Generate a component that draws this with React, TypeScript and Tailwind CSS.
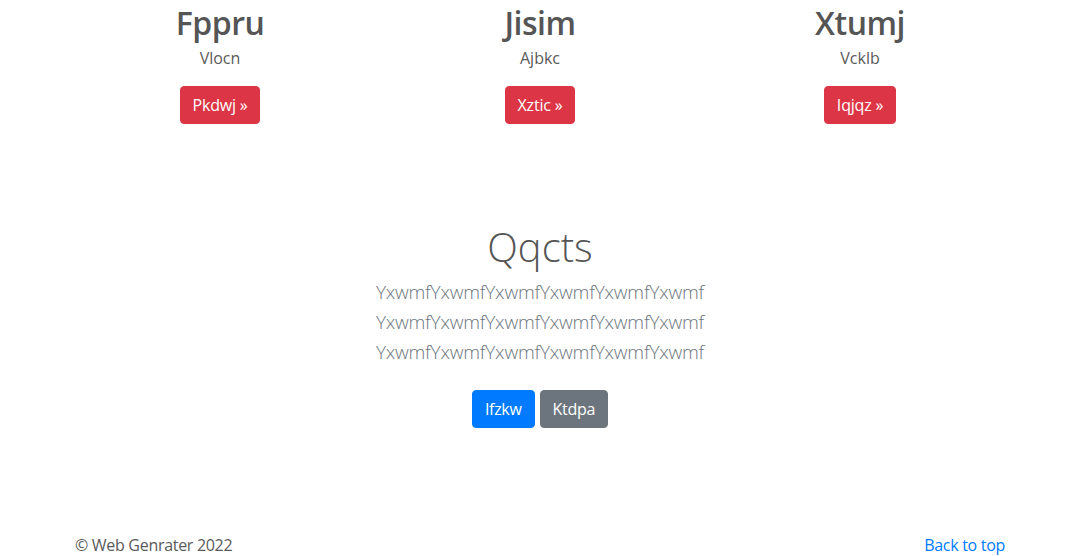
import React from 'react'

interface FeatureProps {
  title: string
  text: string
  action: string
}

const Feature: React.FC<FeatureProps> = ({ title, text, action }) => {
  return (
    <div className="flex w-[320px] flex-col items-center px-[15px] text-center">
      <h2 className="mb-1 pt-1 text-[32px] font-semibold leading-[38px] tracking-[-0.5px] text-[#555]">
        {title}
      </h2>
      <p className="mb-4 text-base leading-6 text-[#5a5a5a]">{text}</p>
      <a
        href="#"
        className="rounded-[4px] border border-[#dc3545] bg-[#dc3545] px-3 py-[6px] text-base leading-6 tracking-[-0.2px] text-white"
      >
        {action} &raquo;
      </a>
    </div>
  )
}

const features = [
  { title: 'Fppru', text: 'Vlocn', action: 'Pkdwj' },
  { title: 'Jisim', text: 'Ajbkc', action: 'Xztic' },
  { title: 'Xtumj', text: 'Vcklb', action: 'Iqjqz' },
]

export default function App() {
  return (
    <div className="h-[556px] overflow-hidden bg-white font-['Open_Sans',sans-serif]">
      <div className="mx-auto flex w-[960px] flex-row">
        {features.map((f) => (
          <Feature key={f.title} {...f} />
        ))}
      </div>

      <section className="mt-[99px] flex flex-col items-center text-center">
        <h1 className="mb-[6px] text-[40px] font-light leading-[48px] text-[#555]">
          Qqcts
        </h1>
        <p className="mb-[15px] w-[400px] text-[19px] font-light leading-[30px] tracking-[-0.2px] text-[#6c757d]">
          YxwmfYxwmfYxwmfYxwmfYxwmfYxwmf YxwmfYxwmfYxwmfYxwmfYxwmfYxwmf
          YxwmfYxwmfYxwmfYxwmfYxwmfYxwmf
        </p>
        <div className="my-2 flex flex-row gap-[5px]">
          <a
            href="#"
            className="rounded-[4px] border border-[#007bff] bg-[#007bff] px-3 py-[6px] text-base leading-6 tracking-[-0.3px] text-white"
          >
            Ifzkw
          </a>
          <a
            href="#"
            className="rounded-[4px] border border-[#6c757d] bg-[#6c757d] px-3 py-[6px] text-base leading-6 tracking-[-0.3px] text-white"
          >
            Ktdpa
          </a>
        </div>
      </section>

      <footer className="mx-auto mt-[97px] flex w-[960px] flex-row justify-between px-[15px] text-base leading-6 tracking-[-0.3px]">
        <p className="text-[#5a5a5a]">&copy; Web Genrater 2022</p>
        <a href="#" className="text-[#007bff]">
          Back to top
        </a>
      </footer>
    </div>
  )
}
